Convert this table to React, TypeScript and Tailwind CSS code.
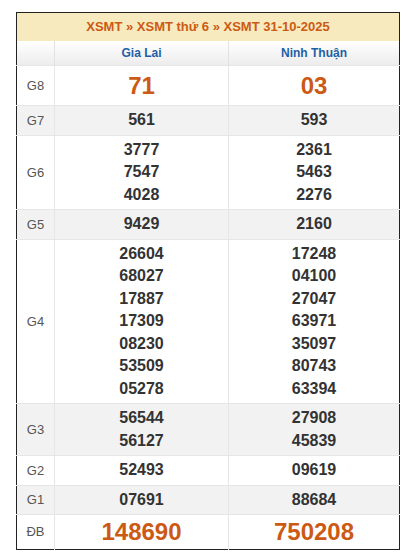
import React from 'react';

type Prize = { label: string; a: string[]; b: string[]; big?: boolean; h?: string };

const prizes: Prize[] = [
  { label: 'G8', a: ['71'], b: ['03'], big: true, h: 'h-[40px]' },
  { label: 'G7', a: ['561'], b: ['593'] },
  { label: 'G6', a: ['3777', '7547', '4028'], b: ['2361', '5463', '2276'] },
  { label: 'G5', a: ['9429'], b: ['2160'] },
  {
    label: 'G4',
    a: ['26604', '68027', '17887', '17309', '08230', '53509', '05278'],
    b: ['17248', '04100', '27047', '63971', '35097', '80743', '63394'],
  },
  { label: 'G3', a: ['56544', '56127'], b: ['27908', '45839'] },
  { label: 'G2', a: ['52493'], b: ['09619'] },
  { label: 'G1', a: ['07691'], b: ['88684'] },
  { label: 'ĐB', a: ['148690'], b: ['750208'], big: true, h: 'h-[35px]' },
];

const NumCell: React.FC<{ nums: string[]; big?: boolean }> = ({ nums, big }) => (
  <td className="border-l border-[#e6e6e6] text-center align-middle py-[3px]">
    {nums.map((n) => (
      <div
        key={n}
        className={
          big
            ? 'text-[24px] leading-[28px] font-bold text-[#cc5a14]'
            : 'text-[16px] leading-[22.5px] font-bold text-[#333]'
        }
      >
        {n}
      </div>
    ))}
  </td>
);

export default function App() {
  return (
    <div className="bg-white w-[420px] h-[559px] pt-[12px] pl-[16px] font-['Liberation_Sans',Arial,sans-serif]">
      <table className="w-[384px] border-collapse border border-[#222] table-fixed">
        <colgroup>
          <col className="w-[38px]" />
          <col className="w-[174px]" />
          <col />
        </colgroup>
        <thead>
          <tr className="h-[28px] bg-[#f7eabf]">
            <th colSpan={3} className="text-[13px] font-bold text-[#cc5a14] text-center">
              XSMT » XSMT thứ 6 » XSMT 31-10-2025
            </th>
          </tr>
          <tr className="h-[25px] bg-gradient-to-b from-white to-[#ececec]">
            <th className="" />
            <th className="border-l border-[#e2e2e2] text-[12px] font-bold text-[#1f5fa6]">Gia Lai</th>
            <th className="border-l border-[#e2e2e2] text-[12px] font-bold text-[#1f5fa6]">Ninh Thuận</th>
          </tr>
        </thead>
        <tbody>
          {prizes.map((p, i) => (
            <tr
              key={p.label}
              className={`${i % 2 === 1 ? 'bg-[#f2f2f2]' : 'bg-white'} border-t border-[#e6e6e6] ${p.h ?? ''}`}
            >
              <td className="text-center text-[13px] text-[#555] align-middle">{p.label}</td>
              <NumCell nums={p.a} big={p.big} />
              <NumCell nums={p.b} big={p.big} />
            </tr>
          ))}
        </tbody>
      </table>
    </div>
  );
}
